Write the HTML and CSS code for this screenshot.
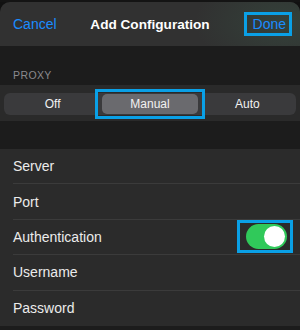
FILE: index.html
```html
<!DOCTYPE html>
<html lang="en">

<head>
    <meta charset="UTF-8">
    <meta name="viewport" content="width=device-width, initial-scale=1.0">
    <title>Add Configuration</title>
    <link rel="stylesheet" href="styles.css">
</head>

<body>
    <div class="backdrop"></div>

    <div class="sheet">
        <header class="nav">
            <a class="nav-btn">Cancel</a>
            <h1>Add Configuration</h1>
            <a class="nav-btn nav-done mark">Done</a>
        </header>

        <div class="section-label">PROXY</div>
        <div class="proxy-row">
            <div class="segmented">
                <div class="segment">Off</div>
                <div class="segment selected mark">Manual</div>
                <div class="segment">Auto</div>
            </div>
        </div>

        <div class="list">
            <div class="row"><span>Server</span></div>
            <div class="row"><span>Port</span></div>
            <div class="row">
                <span>Authentication</span>
                <span class="toggle on mark"><span class="knob"></span></span>
            </div>
            <div class="row"><span>Username</span></div>
            <div class="row"><span>Password</span></div>
        </div>
    </div>
</body>

</html>
```

FILE: styles.css
```css
body {
    font-family: 'Liberation Sans', Arial, sans-serif;
    background: #111111;
    color: #ffffff;
    margin: 0;
    padding: 0;
    width: 300px;
    height: 330px;
    overflow: hidden;
}

.backdrop {
    height: 2px;
    background: #141414;
}

.sheet {
    background: #1c1c1c;
    border-radius: 10px 10px 0 0;
    overflow: hidden;
    height: 328px;
}

.nav {
    height: 44px;
    display: grid;
    grid-template-columns: 1fr auto 1fr;
    align-items: center;
    padding: 0 13px;
    background: radial-gradient(ellipse 90px 50px at 285px 20px, #34413a, rgba(50, 50, 50, 0)), #313131;
}

.nav h1 {
    margin: 0;
    font-size: 13.6px;
    font-weight: 700;
    color: #ffffff;
}

.nav-btn {
    color: #1a8cff;
    font-size: 14px;
}

.nav-done {
    justify-self: end;
    margin-right: 1px;
}

/* cyan highlight boxes drawn over the screenshot */
.mark {
    position: relative;
}

.mark::after {
    content: '';
    position: absolute;
    border: 3px solid #0aa0e6;
}

.nav-done::after {
    inset: -4px -6px -4px -9px;
}

.section-label {
    padding: 23px 13px 0;
    height: 15px;
    font-size: 10.5px;
    letter-spacing: 0.4px;
    color: #8a8a8e;
}

.proxy-row {
    margin-top: 1px;
    background: #2a2a2a;
    padding: 8px 4px 6px;
}

.segmented {
    display: flex;
    background: #3a3a3c;
    border-radius: 6px;
    padding: 1px;
    height: 20px;
}

.segment {
    flex: 1;
    display: flex;
    align-items: center;
    justify-content: center;
    font-size: 12px;
    color: #f2f2f2;
    border-radius: 5px;
}

.segment.selected {
    background: #6a6a6e;
    margin: 0 2px;
}

.segment.selected::after {
    inset: -5px -7px -5px -7px;
}

.list {
    margin-top: 28px;
    background: #2b2b2b;
}

.row {
    height: 35.4px;
    margin-left: 13px;
    padding-right: 13px;
    display: flex;
    align-items: center;
    justify-content: space-between;
    font-size: 14px;
    color: #ececec;
    border-bottom: 1px solid #3b3b3b;
    box-sizing: border-box;
}

.row:last-child {
    border-bottom: none;
}

.toggle {
    width: 41px;
    height: 25px;
    border-radius: 13px;
    background: #30c95a;
    display: flex;
    align-items: center;
    justify-content: flex-end;
    padding: 2px;
    box-sizing: border-box;
}

.toggle::after {
    inset: -4px -6px -4px -9px;
}

.knob {
    width: 21px;
    height: 21px;
    border-radius: 50%;
    background: #ffffff;
}
```
